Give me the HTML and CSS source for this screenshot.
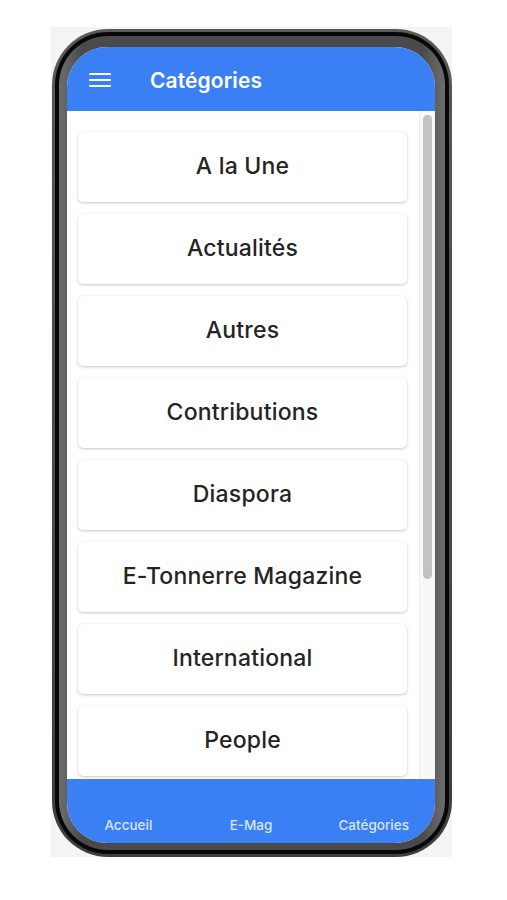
FILE: index.html
```html
<!DOCTYPE html>
<html lang="fr">
<head>
<meta charset="utf-8">
<title>Catégories</title>
<link rel="stylesheet" href="styles.css">
</head>
<body>
<div class="stage">
  <div class="backdrop">
    <div class="phone">
      <div class="bezel">
        <div class="rim">
          <div class="screen">
            <header class="appbar">
              <svg class="menu" width="22" height="16" viewBox="0 0 22 16" aria-hidden="true">
                <rect x="0" y="1" width="22" height="2" rx="1" fill="#fff"/>
                <rect x="0" y="7" width="22" height="2" rx="1" fill="#fff"/>
                <rect x="0" y="13" width="22" height="2" rx="1" fill="#fff"/>
              </svg>
              <h1 class="title">Catégories</h1>
            </header>
            <main class="content">
              <ul class="list">
                <li class="card">A la Une</li>
                <li class="card">Actualités</li>
                <li class="card">Autres</li>
                <li class="card">Contributions</li>
                <li class="card">Diaspora</li>
                <li class="card">E-Tonnerre Magazine</li>
                <li class="card">International</li>
                <li class="card">People</li>
              </ul>
              <div class="track"><div class="thumb"></div></div>
            </main>
            <nav class="tabbar">
              <span class="tab">Accueil</span>
              <span class="tab">E-Mag</span>
              <span class="tab">Catégories</span>
            </nav>
          </div>
        </div>
      </div>
    </div>
  </div>
</div>
</body>
</html>
```
FILE: styles.css
```css
* { box-sizing: border-box; }
html, body { margin: 0; padding: 0; background: #ffffff; }
body { font-family: Inter, "Liberation Sans", Arial, sans-serif; }

.stage { padding: 27px 0 0 51px; }

.backdrop {
  width: 401px;
  height: 830px;
  background: #f4f4f4;
  padding: 2px 0 0 1px;
}

.phone {
  width: 400px;
  height: 828px;
  border-radius: 56px;
  background: linear-gradient(180deg, #5a5a5a, #3e3e3e);
  padding: 3px;
}

.bezel {
  height: 100%;
  border-radius: 53px;
  background: #080808;
  padding: 4px;
}

.rim {
  height: 100%;
  border-radius: 49px;
  background: linear-gradient(90deg, #6e6e6e, #4a4a4a 6%, #4a4a4a 94%, #6e6e6e);
  padding: 11px 10px 7px 8px;
}

.screen {
  height: 100%;
  border-radius: 40px;
  overflow: hidden;
  display: flex;
  flex-direction: column;
  background: #ffffff;
}

.appbar {
  height: 64px;
  flex: 0 0 64px;
  background: #3a80f4;
  display: flex;
  align-items: center;
  padding-left: 22px;
  padding-top: 2px;
}

.menu { display: block; }

.title {
  margin: 0 0 0 39px;
  color: #ffffff;
  font-size: 21px;
  font-weight: 600;
  letter-spacing: 0.1px;
}

.content {
  flex: 1;
  display: flex;
  min-height: 0;
  background: #ffffff;
}

.list {
  list-style: none;
  margin: 0;
  flex: 1;
  padding: 21px 12px 0 11px;
  display: flex;
  flex-direction: column;
  gap: 12px;
  overflow: hidden;
}

.card {
  flex: 0 0 70px;
  height: 70px;
  background: #ffffff;
  border-radius: 5px;
  box-shadow: 0 1px 3px rgba(0, 0, 0, 0.22), 0 0 1px rgba(0, 0, 0, 0.08);
  display: flex;
  align-items: center;
  justify-content: center;
  color: #242424;
  font-size: 23px;
  font-weight: 500;
  letter-spacing: 0.2px;
  padding-bottom: 3px;
}

.track {
  width: 16px;
  flex: 0 0 16px;
  background: #f8f8f8;
  border-left: 1px solid #ededed;
  padding: 4px 3px 0 3px;
}

.thumb {
  width: 9px;
  height: 464px;
  border-radius: 5px;
  background: #c3c3c3;
}

.tabbar {
  height: 64px;
  flex: 0 0 64px;
  background: #3a80f4;
  display: flex;
  align-items: flex-end;
  padding-bottom: 10px;
}

.tab {
  flex: 1;
  text-align: center;
  color: #d8e5fc;
  font-size: 13.5px;
  font-weight: 500;
}
```
